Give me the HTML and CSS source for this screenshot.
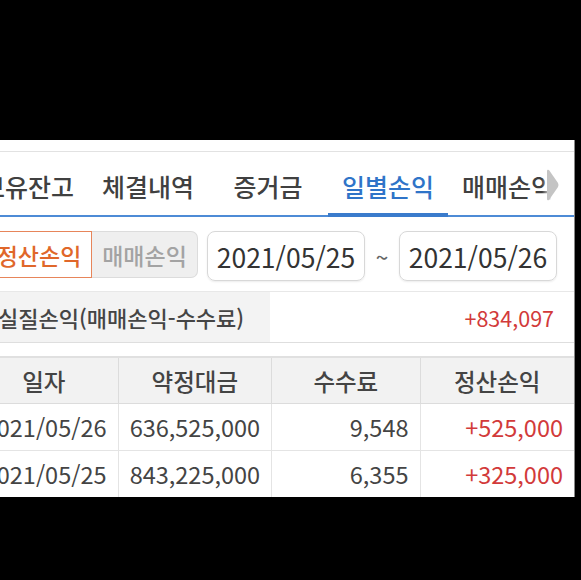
FILE: index.html
```html
<!DOCTYPE html>
<html lang="ko">
<head>
    <meta charset="UTF-8">
    <meta name="viewport" content="width=device-width, initial-scale=1.0">
    <title>일별손익</title>
    <link rel="stylesheet" href="styles.css">
</head>
<body>
    <div class="panel">
        <div class="tabs">
            <div class="tab">보유잔고</div>
            <div class="tab">체결내역</div>
            <div class="tab">증거금</div>
            <div class="tab active">일별손익</div>
            <div class="tab">매매손익</div>
            <div class="tab">예수금</div>
        </div>
        <div class="tab-more">
            <svg width="14" height="34" viewBox="0 0 14 34"><path d="M3 2 L12 15 Q13 17 12 19 L3 32 Q1 33 1 31 L1 3 Q1 1 3 2 Z" fill="#c4c4c4"/></svg>
        </div>

        <div class="filters">
            <div class="segment">
                <button class="seg active">정산손익</button>
                <button class="seg">매매손익</button>
            </div>
            <div class="date">2021/05/25</div>
            <span class="tilde">~</span>
            <div class="date">2021/05/26</div>
        </div>

        <div class="summary">
            <div class="summary-label">실질손익(매매손익-수수료)</div>
            <div class="summary-value plus">+834,097</div>
        </div>

        <table class="grid">
            <thead>
                <tr>
                    <th class="c1">일자</th>
                    <th class="c2">약정대금</th>
                    <th class="c3">수수료</th>
                    <th class="c4">정산손익</th>
                </tr>
            </thead>
            <tbody>
                <tr>
                    <td>2021/05/26</td>
                    <td>636,525,000</td>
                    <td>9,548</td>
                    <td class="plus">+525,000</td>
                </tr>
                <tr>
                    <td>2021/05/25</td>
                    <td>843,225,000</td>
                    <td>6,355</td>
                    <td class="plus">+325,000</td>
                </tr>
            </tbody>
        </table>
    </div>
</body>
</html>
```

FILE: styles.css
```css
body {
    margin: 0;
    background: #000;
    font-family: "Noto Sans CJK KR", "Noto Sans", sans-serif;
    font-weight: 500;
    color: #444;
}

.panel {
    position: relative;
    width: 575px;
    height: 357px;
    margin-top: 140px;
    background: #fff;
    overflow: hidden;
    border-right: 1px solid #888;
    box-sizing: border-box;
}

/* tab strip, scrolled a little to the left */
.tabs {
    display: flex;
    margin-top: 11px;
    margin-left: -32px;
    border-top: 1px solid #e2e2e2;
    border-bottom: 2px solid #4d8bd6;
    height: 63px;
}
.tab {
    flex: 0 0 120px;
    display: flex;
    align-items: center;
    justify-content: center;
    font-size: 25px;
    color: #404040;
    box-sizing: border-box;
    padding-top: 4px;
}
.tab.active {
    color: #2f74c8;
    border-bottom: 4px solid #3a7bcc;
    margin-bottom: -2px;
    padding-top: 6px;
}
.tab-more {
    position: absolute;
    top: 12px;
    right: 0;
    width: 32px;
    height: 62px;
    display: flex;
    align-items: center;
    justify-content: flex-start;
    padding-left: 4px;
    padding-top: 4px;
    box-sizing: border-box;
    background: linear-gradient(to right, rgba(255,255,255,0), #fff 30%);
}

.filters {
    display: flex;
    align-items: flex-start;
    margin: 14px 0 0 -14px;
    height: 51px;
}
.segment {
    display: flex;
}
.seg {
    width: 106px;
    height: 47px;
    font-family: inherit;
    font-weight: 500;
    font-size: 23px;
    border: 1px solid #dcdcdc;
    background: #efefef;
    color: #a3a3a3;
    padding: 0;
    margin: 0;
    border-radius: 0 7px 7px 0;
    border-left: none;
}
.seg.active {
    background: #fff;
    color: #e0672a;
    border: 1px solid #e7855a;
    border-radius: 0;
}
.date {
    width: 158px;
    height: 50px;
    margin-left: 9px;
    box-sizing: border-box;
    border: 1px solid #d8d8d8;
    border-radius: 8px;
    box-shadow: 0 1px 2px rgba(0, 0, 0, 0.08);
    display: flex;
    align-items: center;
    justify-content: center;
    font-size: 26.5px;
    font-weight: 400;
    color: #333;
}
.tilde {
    width: 34px;
    text-align: center;
    line-height: 50px;
    font-size: 22px;
    color: #666;
}
.tilde + .date {
    margin-left: 0;
}

.summary {
    display: flex;
    margin: 9px 0 0 -14px;
    height: 50px;
    border-top: 1px solid #e8e8e8;
    border-bottom: 1px solid #dedede;
}
.summary-label {
    width: 284px;
    background: #f3f3f3;
    padding-left: 12px;
    box-sizing: border-box;
    display: flex;
    align-items: center;
    font-size: 22px;
    color: #454545;
}
.summary-value {
    flex: 1;
    display: flex;
    align-items: center;
    justify-content: flex-end;
    padding-right: 20px;
    font-size: 21.5px;
    font-weight: 400;
}

.plus {
    color: #d23a3a;
}

.grid {
    border-collapse: collapse;
    margin: 13px 0 0 -31px;
    width: 606px;
    font-size: 23.5px;
}
.grid th {
    height: 45px;
    background: #f2f2f2;
    font-weight: 500;
    color: #444;
    border: 1px solid #dcdcdc;
    border-top: 2px solid #e0e0e0;
    padding: 0;
}
.grid td {
    height: 46px;
    text-align: right;
    padding: 0 11px 0 0;
    border: 1px solid #e4e4e4;
    font-weight: 400;
    color: #444;
}
.grid td.plus {
    color: #d23a3a;
}
.c1 { width: 148px; }
.c2 { width: 153px; }
.c3 { width: 150px; }
.c4 { width: 155px; }
```
